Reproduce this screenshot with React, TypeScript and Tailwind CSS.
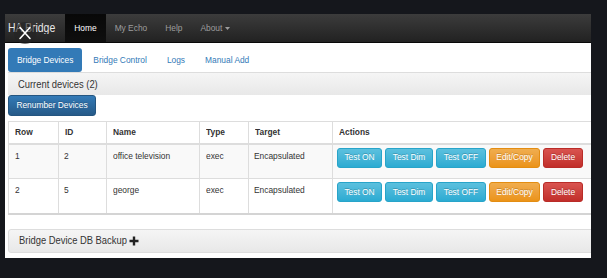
import React from "react";

const rows = [
  { row: "1", id: "2", name: "office television", type: "exec", target: "Encapsulated", striped: true },
  { row: "2", id: "5", name: "george", type: "exec", target: "Encapsulated", striped: false },
];

function T({ children }: { children: React.ReactNode }) {
  return <span className="inline-block [transform:scaleY(1.17)]">{children}</span>;
}

function Btn({ label, kind, w }: { label: string; kind: "info" | "warning" | "danger"; w: string }) {
  const cls =
    kind === "info"
      ? "bg-gradient-to-b from-[#5bc0de] to-[#2aabd2] border-[#28a4c9]"
      : kind === "warning"
      ? "bg-gradient-to-b from-[#f0ad4e] to-[#eb9316] border-[#e38d13]"
      : "bg-gradient-to-b from-[#d9534f] to-[#c12e2a] border-[#b92c28]";
  return (
    <div
      className={`h-[20px] ${w} flex items-center justify-center rounded-[3px] border text-[8.4px] text-white [text-shadow:0_-1px_0_rgba(0,0,0,0.2)] ${cls}`}
    >
      <T>{label}</T>
    </div>
  );
}

function Buttons() {
  return (
    <div className="flex gap-[3px]">
      <Btn label="Test ON" kind="info" w="w-[45px]" />
      <Btn label="Test Dim" kind="info" w="w-[48px]" />
      <Btn label="Test OFF" kind="info" w="w-[50px]" />
      <Btn label="Edit/Copy" kind="warning" w="w-[51px]" />
      <Btn label="Delete" kind="danger" w="w-[40px]" />
    </div>
  );
}

export default function App() {
  return (
    <div className="w-[607px] h-[278px] bg-[#15171c] pt-[14px] pl-[5px] overflow-hidden font-['Liberation_Sans',Arial,sans-serif]">
      <div className="relative w-[586px] h-[244px] bg-white overflow-hidden">
        {/* navbar */}
        <div className="h-[29px] flex items-stretch bg-gradient-to-b from-[#3c3c3c] to-[#222222] border-b border-[#080808] pl-[3px]">
          <div className="flex items-center pr-[10px] text-[10.5px] text-[#e6e6e6]"><T>HA Bridge</T></div>
          <div className="flex items-center px-[9px] text-[8.4px] text-white bg-gradient-to-b from-[#080808] to-[#0f0f0f]"><T>Home</T></div>
          <div className="flex items-center px-[9px] text-[8.4px] text-[#9d9d9d]"><T>My Echo</T></div>
          <div className="flex items-center px-[9px] text-[8.4px] text-[#9d9d9d]"><T>Help</T></div>
          <div className="flex items-center px-[9px] text-[8.4px] text-[#9d9d9d] gap-[3px]">
            <T>About</T>
            <svg width="5" height="3" viewBox="0 0 5 3">
              <path d="M0 0 L5 0 L2.5 3 Z" fill="#9d9d9d" />
            </svg>
          </div>
        </div>

        {/* tabs */}
        <div className="flex gap-[2px] pt-[5px] pl-[3px]">
          <div className="h-[24px] px-[9px] flex items-center rounded-[3px] bg-[#337ab7] text-white text-[8.4px]"><T>Bridge Devices</T></div>
          <div className="h-[24px] px-[9px] flex items-center text-[#337ab7] text-[8.4px]"><T>Bridge Control</T></div>
          <div className="h-[24px] px-[9px] flex items-center text-[#337ab7] text-[8.4px]"><T>Logs</T></div>
          <div className="h-[24px] px-[9px] flex items-center text-[#337ab7] text-[8.4px]"><T>Manual Add</T></div>
        </div>

        <div className="pl-[3px] w-[620px]">
          {/* current devices panel */}
          <div className="border-t border-[#dddddd]">
            <div className="h-[22px] px-[10px] flex items-center bg-gradient-to-b from-[#f5f5f5] to-[#e8e8e8] text-[9.4px] text-[#333]">
              <T>Current devices (2)</T>
            </div>
            <div className="flex">
              <div className="h-[21px] w-[88px] flex items-center justify-center rounded-[3px] border border-[#245580] bg-gradient-to-b from-[#337ab7] to-[#265a88] text-white text-[8.4px] [text-shadow:0_-1px_0_rgba(0,0,0,0.2)]">
                <T>Renumber Devices</T>
              </div>
            </div>
            <table className="mt-[5px] table-fixed border-collapse border border-[#dddddd] border-b-2 border-b-[#d4d4d4] text-[8.4px] text-[#333] w-[594px]">
              <colgroup>
                <col className="w-[50px]" />
                <col className="w-[48px]" />
                <col className="w-[93px]" />
                <col className="w-[49px]" />
                <col className="w-[84px]" />
                <col />
              </colgroup>
              <thead>
                <tr className="h-[22px]">
                  {["Row", "ID", "Name", "Type", "Target", "Actions"].map((h) => (
                    <th key={h} className="border border-[#dddddd] border-b-2 text-left font-bold pl-[6px] align-middle">
                      <T>{h}</T>
                    </th>
                  ))}
                </tr>
              </thead>
              <tbody>
                {rows.map((r) => (
                  <tr key={r.row} className={`h-[35px] ${r.striped ? "bg-[#f9f9f9]" : "bg-white"}`}>
                    <td className="border border-[#dddddd] align-top pl-[6px] pt-[5px]"><T>{r.row}</T></td>
                    <td className="border border-[#dddddd] align-top pl-[5px] pt-[5px]"><T>{r.id}</T></td>
                    <td className="border border-[#dddddd] align-top pl-[6px] pt-[5px]"><T>{r.name}</T></td>
                    <td className="border border-[#dddddd] align-top pl-[6px] pt-[5px]"><T>{r.type}</T></td>
                    <td className="border border-[#dddddd] align-top pl-[5px] pt-[5px]"><T>{r.target}</T></td>
                    <td className="border border-[#dddddd] align-top pl-[4px] pt-[3px]">
                      <Buttons />
                    </td>
                  </tr>
                ))}
              </tbody>
            </table>
          </div>

          {/* backup panel */}
          <div className="mt-[14px] h-[24px] border border-[#dddddd] rounded-[3px] bg-gradient-to-b from-[#f5f5f5] to-[#e8e8e8] px-[10px] flex items-center gap-[2px] text-[9.4px] text-[#333]">
            <T>Bridge Device DB Backup</T>
            <svg width="10" height="10" viewBox="0 0 10 10">
              <path d="M5 0.5 V9.5 M0.5 5 H9.5" stroke="#222" strokeWidth="2.4" />
            </svg>
          </div>
        </div>

        {/* close overlay */}
        <div className="absolute left-[9px] top-[8px] w-[22px] h-[22px]">
          <svg width="22" height="22" viewBox="0 0 22 22">
            <circle cx="11" cy="11" r="11" fill="rgba(35,35,35,0.6)" />
            <path d="M6 5.5 L16 16.5 M16 5.5 L6 16.5" stroke="#ffffff" strokeWidth="1.6" strokeLinecap="round" />
          </svg>
        </div>
      </div>
    </div>
  );
}
